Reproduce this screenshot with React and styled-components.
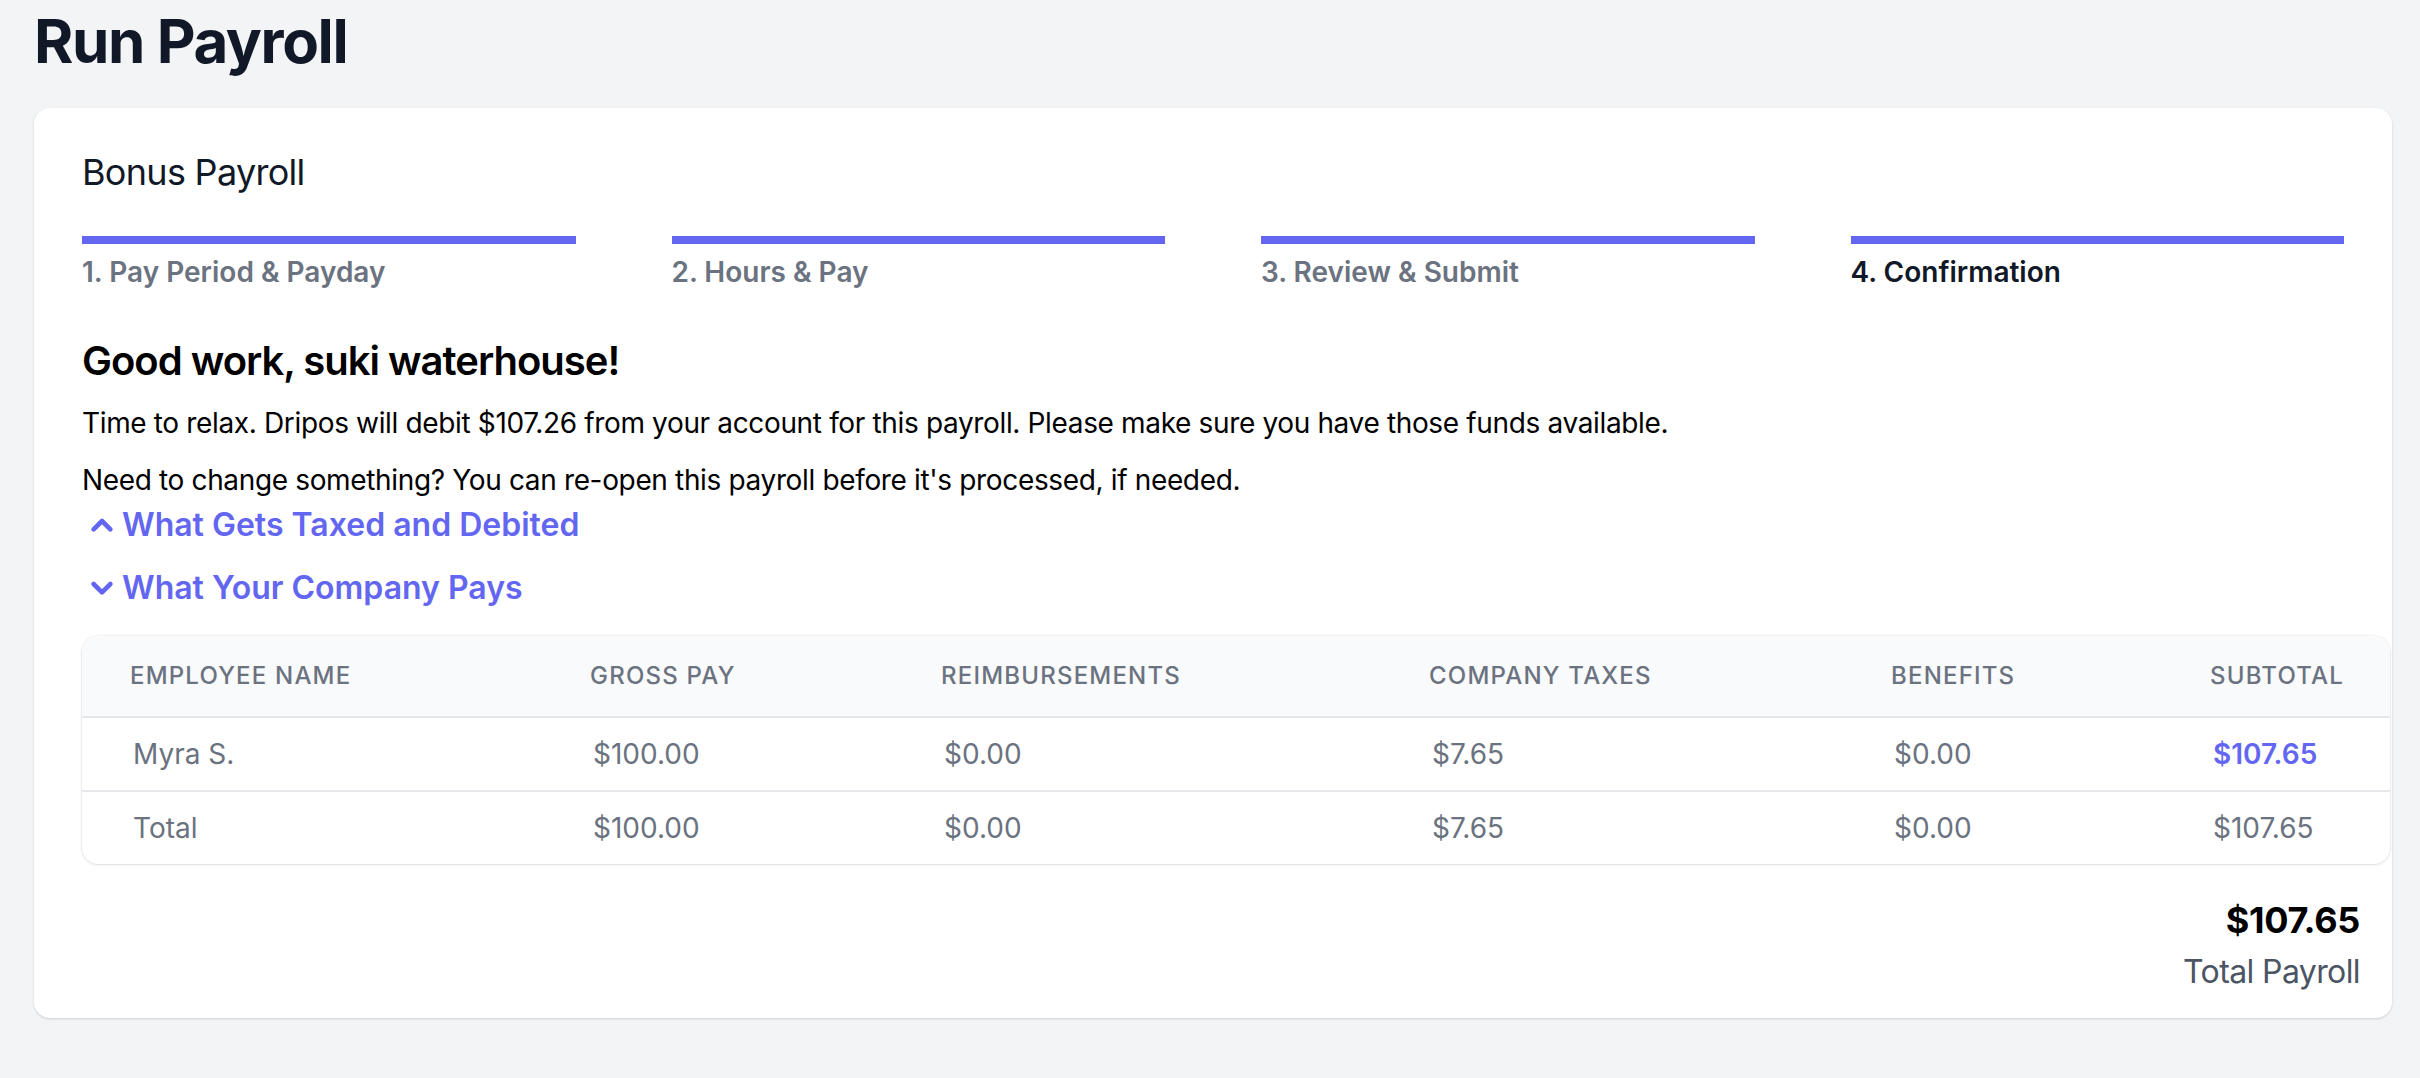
import styled, { createGlobalStyle } from 'styled-components'

const GlobalStyle = createGlobalStyle`
  body {
    margin: 0;
    background: #f3f4f6;
    font-family: Inter, "Noto Sans", "Liberation Sans", sans-serif;
  }
`

const Page = styled.div`
  padding: 5px 28px 40px 34px;
`

const Title = styled.h1`
  margin: 0;
  font-size: 60px;
  line-height: 72px;
  font-weight: 700;
  letter-spacing: -1.4px;
  color: #111827;
`

const Card = styled.div`
  margin-top: 31px;
  background: #fff;
  border-radius: 16px;
  box-shadow: 0 1px 3px rgba(0, 0, 0, 0.1), 0 1px 2px rgba(0, 0, 0, 0.06);
  padding: 36px 48px 22px 48px;
`

const CardTitle = styled.h2`
  margin: 0;
  font-size: 36px;
  line-height: 56px;
  font-weight: 400;
  letter-spacing: -0.7px;
  color: #111827;
`

const Steps = styled.div`
  margin-top: 36px;
  display: grid;
  grid-template-columns: repeat(4, 1fr);
  column-gap: 96px;
`

const Step = styled.div`
  display: flex;
  flex-direction: column;
`

const Bar = styled.div`
  height: 8px;
  background: #6366f1;
`

const StepLabel = styled.span`
  margin-top: 8px;
  font-size: 28px;
  line-height: 40px;
  font-weight: 600;
  color: ${(p) => (p.$active ? '#111827' : '#6b7280')};
`

const Heading = styled.h3`
  margin: 41px 0 0;
  font-size: 40px;
  line-height: 56px;
  font-weight: 600;
  letter-spacing: -1px;
  color: #000;
`

const Text = styled.p`
  margin: ${(p) => p.$mt || 0}px 0 0;
  font-size: 28px;
  line-height: 40px;
  letter-spacing: -0.35px;
  color: #000;
`

const Toggle = styled.button`
  display: flex;
  align-items: center;
  margin-top: ${(p) => p.$mt || 0}px;
  padding: 0;
  border: 0;
  background: none;
  font-family: inherit;
  font-size: 32px;
  line-height: 48px;
  font-weight: 600;
  color: #6366f1;
  cursor: pointer;

  svg {
    width: 40px;
    height: 40px;
    flex-shrink: 0;
  }
`

const TableWrap = styled.div`
  margin: 24px -46px 0 0;
  border-radius: 16px;
  overflow: hidden;
  box-shadow: 0 1px 3px rgba(0, 0, 0, 0.1), 0 0 0 1px rgba(0, 0, 0, 0.04);
`

const Table = styled.table`
  width: 100%;
  border-collapse: collapse;
  table-layout: fixed;
`

const Th = styled.th`
  padding: 24px 0 24px 48px;
  text-align: left;
  font-size: 24px;
  line-height: 32px;
  font-weight: 500;
  letter-spacing: 0.05em;
  text-transform: uppercase;
  color: #6b7280;
  background: #f9fafb;
  border-bottom: 2px solid #e5e7eb;
`

const Td = styled.td`
  padding: 16px 0 16px 51px;
  font-size: 28px;
  line-height: 40px;
  color: ${(p) => (p.$strong ? '#6366f1' : '#6b7280')};
  font-weight: ${(p) => (p.$strong ? 600 : 400)};
`

const Row = styled.tr`
  & + & td {
    border-top: 2px solid #e5e7eb;
  }
`

const Total = styled.div`
  margin: 28px -16px 0 0;
  text-align: right;
`

const TotalAmount = styled.div`
  font-size: 36px;
  line-height: 56px;
  font-weight: 700;
  letter-spacing: -0.3px;
  color: #000;
`

const TotalLabel = styled.div`
  font-size: 32px;
  line-height: 48px;
  letter-spacing: -0.6px;
  color: #4b5563;
`

const Chevron = ({ up }) => (
  <svg viewBox="0 0 20 20" fill="none" stroke="currentColor" strokeWidth="2.3" strokeLinecap="round" strokeLinejoin="round">
    <path d={up ? 'M5.8 12.2 L10 8 L14.2 12.2' : 'M5.8 8 L10 12.2 L14.2 8'} />
  </svg>
)

const steps = ['1. Pay Period & Payday', '2. Hours & Pay', '3. Review & Submit', '4. Confirmation']

const columns = ['Employee Name', 'Gross Pay', 'Reimbursements', 'Company Taxes', 'Benefits', 'Subtotal']
const colWidths = [460, 351, 488, 462, 319]

const rows = [
  ['Myra S.', '$100.00', '$0.00', '$7.65', '$0.00', '$107.65', true],
  ['Total', '$100.00', '$0.00', '$7.65', '$0.00', '$107.65', false],
]

const App = () => {
  return (
    <>
      <GlobalStyle />
      <Page>
        <Title>Run Payroll</Title>
        <Card>
          <CardTitle>Bonus Payroll</CardTitle>
          <Steps>
            {steps.map((s, i) => (
              <Step key={s}>
                <Bar />
                <StepLabel $active={i === steps.length - 1}>{s}</StepLabel>
              </Step>
            ))}
          </Steps>

          <Heading>Good work, suki waterhouse!</Heading>
          <Text $mt={14}>
            Time to relax. Dripos will debit $107.26 from your account for this payroll. Please make sure you have those funds available.
          </Text>
          <Text $mt={17}>
            Need to change something? You can re-open this payroll before it's processed, if needed.
          </Text>
          <Toggle $mt={1}>
            <Chevron up />
            What Gets Taxed and Debited
          </Toggle>
          <Toggle $mt={15}>
            <Chevron />
            What Your Company Pays
          </Toggle>

          <TableWrap>
            <Table>
              <colgroup>
                {colWidths.map((w, i) => (
                  <col key={i} style={{ width: w }} />
                ))}
                <col />
              </colgroup>
              <thead>
                <tr>
                  {columns.map((c) => (
                    <Th key={c}>{c}</Th>
                  ))}
                </tr>
              </thead>
              <tbody>
                {rows.map((r) => (
                  <Row key={r[0]}>
                    {r.slice(0, 5).map((v, i) => (
                      <Td key={i}>{v}</Td>
                    ))}
                    <Td $strong={r[6]}>{r[5]}</Td>
                  </Row>
                ))}
              </tbody>
            </Table>
          </TableWrap>

          <Total>
            <TotalAmount>$107.65</TotalAmount>
            <TotalLabel>Total Payroll</TotalLabel>
          </Total>
        </Card>
      </Page>
    </>
  )
}

export default App
